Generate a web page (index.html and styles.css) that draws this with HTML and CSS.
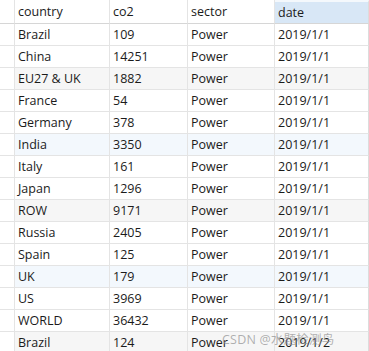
FILE: index.html
```html
<!DOCTYPE html>
<html>
<head>
<meta charset="utf-8">
<link rel="stylesheet" href="styles.css">
</head>
<body>
<div class="grid">
  <div class="row head">
    <div class="c rh"></div><div class="c">country</div><div class="c">co2</div><div class="c">sector</div><div class="c sel">date</div>
  </div>
  <div class="row"><div class="c rh"></div><div class="c">Brazil</div><div class="c">109</div><div class="c">Power</div><div class="c">2019/1/1</div></div>
  <div class="row"><div class="c rh"></div><div class="c">China</div><div class="c">14251</div><div class="c">Power</div><div class="c">2019/1/1</div></div>
  <div class="row gray"><div class="c rh"></div><div class="c">EU27 &amp; UK</div><div class="c">1882</div><div class="c">Power</div><div class="c">2019/1/1</div></div>
  <div class="row"><div class="c rh"></div><div class="c">France</div><div class="c">54</div><div class="c">Power</div><div class="c">2019/1/1</div></div>
  <div class="row"><div class="c rh"></div><div class="c">Germany</div><div class="c">378</div><div class="c">Power</div><div class="c">2019/1/1</div></div>
  <div class="row blue"><div class="c rh"></div><div class="c">India</div><div class="c">3350</div><div class="c">Power</div><div class="c">2019/1/1</div></div>
  <div class="row"><div class="c rh"></div><div class="c">Italy</div><div class="c">161</div><div class="c">Power</div><div class="c">2019/1/1</div></div>
  <div class="row"><div class="c rh"></div><div class="c">Japan</div><div class="c">1296</div><div class="c">Power</div><div class="c">2019/1/1</div></div>
  <div class="row gray"><div class="c rh"></div><div class="c">ROW</div><div class="c">9171</div><div class="c">Power</div><div class="c">2019/1/1</div></div>
  <div class="row"><div class="c rh"></div><div class="c">Russia</div><div class="c">2405</div><div class="c">Power</div><div class="c">2019/1/1</div></div>
  <div class="row"><div class="c rh"></div><div class="c">Spain</div><div class="c">125</div><div class="c">Power</div><div class="c">2019/1/1</div></div>
  <div class="row blue"><div class="c rh"></div><div class="c">UK</div><div class="c">179</div><div class="c">Power</div><div class="c">2019/1/1</div></div>
  <div class="row"><div class="c rh"></div><div class="c">US</div><div class="c">3969</div><div class="c">Power</div><div class="c">2019/1/1</div></div>
  <div class="row"><div class="c rh"></div><div class="c">WORLD</div><div class="c">36432</div><div class="c">Power</div><div class="c">2019/1/1</div></div>
  <div class="row gray"><div class="c rh"></div><div class="c">Brazil</div><div class="c">124</div><div class="c">Power</div><div class="c">2019/1/2</div></div>
  <div class="wm">CSDN @水题检测鸟</div>
</div>
</body>
</html>
```
FILE: styles.css
```css
html, body {
  margin: 0;
  padding: 0;
  background: #ffffff;
  overflow: hidden;
}
.grid {
  position: relative;
  width: 369px;
  height: 351px;
  overflow: hidden;
  font-family: "Open Sans", "Noto Sans CJK SC", sans-serif;
  font-size: 12.5px;
  color: #1b1b1b;
}
.row {
  display: grid;
  grid-template-columns: 15px 95px 78px 87px 94px;
  height: 22px;
}
.row.head {
  height: 24px;
}
.c {
  box-sizing: border-box;
  border-right: 1px solid #e4e4e4;
  border-bottom: 1px solid #e4e4e4;
  padding-left: 3px;
  line-height: 21px;
  white-space: nowrap;
  overflow: hidden;
}
.head .c {
  line-height: 23px;
  border-bottom-color: #d6d6d6;
  padding-top: 0;
}
.head .sel {
  background: #d8e7f6;
  border-top: 2px solid #f4f8fc;
  line-height: 21px;
}
.c.rh {
  padding: 0;
  background: #ffffff;
}
.gray .c {
  background: #f6f6f6;
}
.blue .c {
  background: #f3f8fd;
}
.gray .c.rh, .blue .c.rh {
  background: #ffffff;
}
.row .c:last-child {
  border-right-color: #dcdcdc;
}
.wm {
  position: absolute;
  left: 222px;
  top: 329px;
  font-size: 12.5px;
  color: rgba(150, 150, 150, 0.75);
  letter-spacing: 0.2px;
  white-space: nowrap;
}
```
